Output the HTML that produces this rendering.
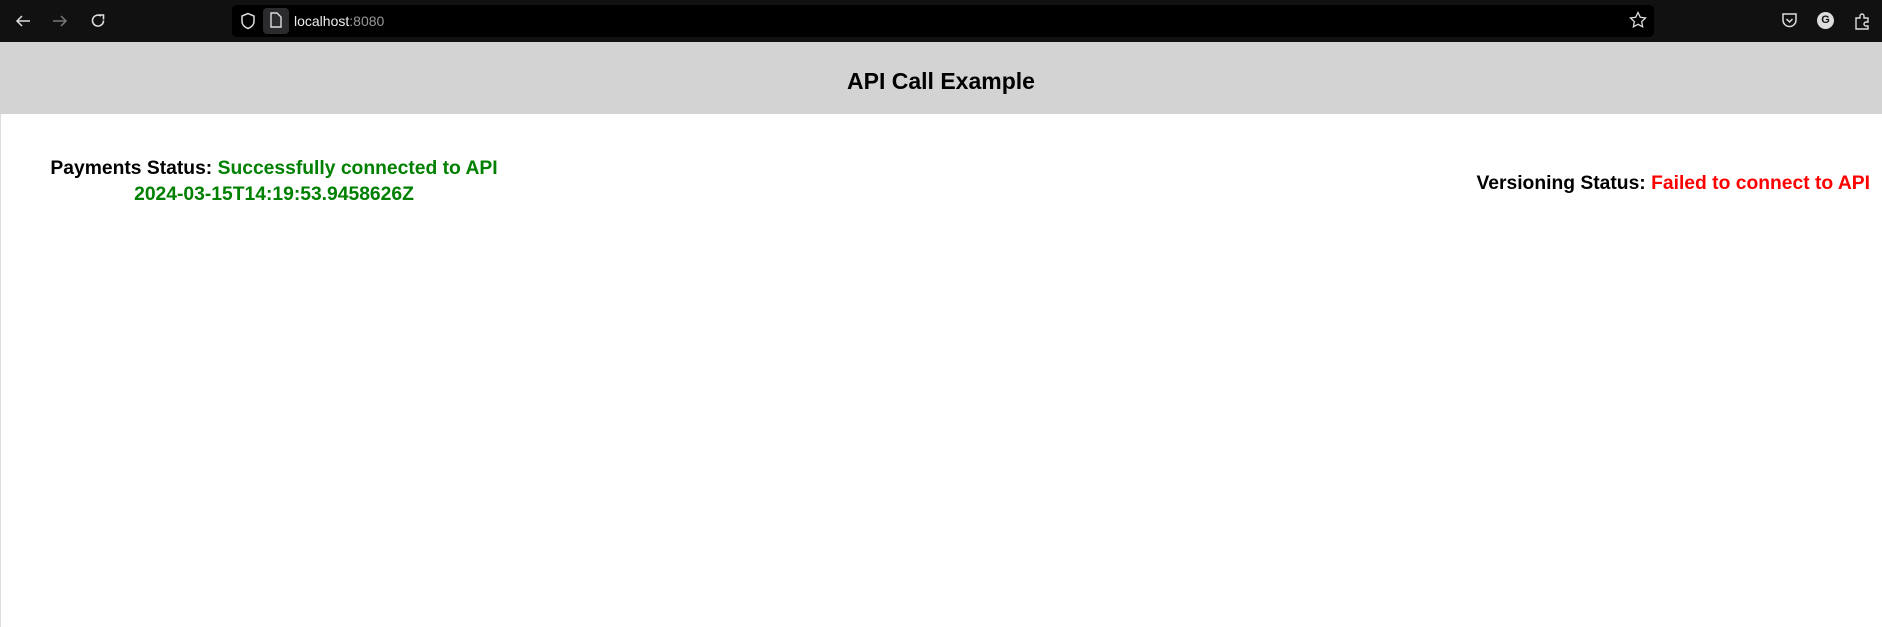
<!DOCTYPE html>
<html><head><meta charset="utf-8"><style>
html,body{margin:0;padding:0;width:1882px;height:627px;overflow:hidden;background:#fff;font-family:"Liberation Sans",sans-serif;}
.tb{position:absolute;left:0;top:0;width:1882px;height:42px;background:#111;}
.url{position:absolute;left:232px;top:5px;width:1422px;height:32px;background:#000;border-radius:5px;}
.pg{position:absolute;left:263px;top:8px;width:26px;height:26px;background:#2b2b2e;border-radius:4px;}
.urltext{position:absolute;left:294px;top:13px;font-size:14px;color:#eee;}
.urltext span{color:#999}
.hdr{position:absolute;left:0;top:42px;width:1882px;height:72px;background:#d3d3d3;}
.title{position:absolute;left:0;width:1882px;top:68px;text-align:center;font-weight:bold;font-size:23px;color:#000;}
.pay{position:absolute;left:30px;width:488px;top:156px;text-align:center;font-weight:bold;font-size:19.3px;line-height:26px;}
.ver{position:absolute;right:12px;top:173px;font-weight:bold;font-size:19.3px;}
.g{color:#008000}.r{color:#f00}
.lb{position:absolute;left:0;top:114px;width:1px;height:513px;background:#ddd;}
</style></head><body>
<div class="tb">
<svg style="position:absolute;left:14px;top:12px" width="18" height="18" viewBox="0 0 18 18" fill="none" stroke="#ddd" stroke-width="1.5"><path d="M16 9H3M8 4L3 9l5 5"/></svg>
<svg style="position:absolute;left:51px;top:12px" width="18" height="18" viewBox="0 0 18 18" fill="none" stroke="#777" stroke-width="1.5"><path d="M2 9h13M10 4l5 5-5 5"/></svg>
<svg style="position:absolute;left:89px;top:12px" width="18" height="18" viewBox="0 0 18 18" fill="none" stroke="#ddd" stroke-width="1.6"><path d="M14.5 8.5A5.5 5.5 0 1 1 12 4"/><path d="M10 3h4.5V7.5"/></svg>
<div class="url"></div>
<svg style="position:absolute;left:240px;top:12px" width="16" height="18" viewBox="0 0 16 18" fill="none" stroke="#ddd" stroke-width="1.5"><path d="M8 1.5L2 4v5c0 4 3 6.5 6 7.5 3-1 6-3.5 6-7.5V4z"/></svg>
<div class="pg"></div>
<svg style="position:absolute;left:269px;top:12px" width="14" height="16" viewBox="0 0 14 16" fill="none" stroke="#ddd" stroke-width="1.4"><path d="M2 1h6l4 4v10H2z"/></svg>
<div class="urltext">localhost<span>:8080</span></div>
<svg style="position:absolute;left:1629px;top:11px" width="18" height="18" viewBox="0 0 18 18" fill="none" stroke="#ddd" stroke-width="1.3"><path d="M9 1.5l2.3 4.8 5.2.7-3.8 3.6.9 5.2L9 13.3l-4.6 2.5.9-5.2L1.5 7l5.2-.7z"/></svg>
<svg style="position:absolute;left:1781px;top:12px" width="17" height="17" viewBox="0 0 17 17" fill="none" stroke="#ddd" stroke-width="1.5"><path d="M2 2h13v6a6.5 6.5 0 0 1-13 0z"/><path d="M5.5 7l3 3 3-3"/></svg>
<div style="position:absolute;left:1817px;top:12px;width:17px;height:17px;border-radius:50%;background:#ddd;color:#111;font-size:11px;font-weight:bold;text-align:center;line-height:17px">G</div>
<svg style="position:absolute;left:1854px;top:12px" width="17" height="18" viewBox="0 0 17 18" fill="none" stroke="#ddd" stroke-width="1.4"><path d="M2 6h4V4a2 2 0 0 1 4 0v2h4v4h-2a2 2 0 0 0 0 4h2v3H2z"/></svg>
</div>
<div class="hdr"></div>
<div class="title">API Call Example</div>
<div class="lb"></div>
<div class="pay">Payments Status: <span class="g">Successfully connected to API<br>2024-03-15T14:19:53.9458626Z</span></div>
<div class="ver">Versioning Status: <span class="r">Failed to connect to API</span></div>
</body></html>
